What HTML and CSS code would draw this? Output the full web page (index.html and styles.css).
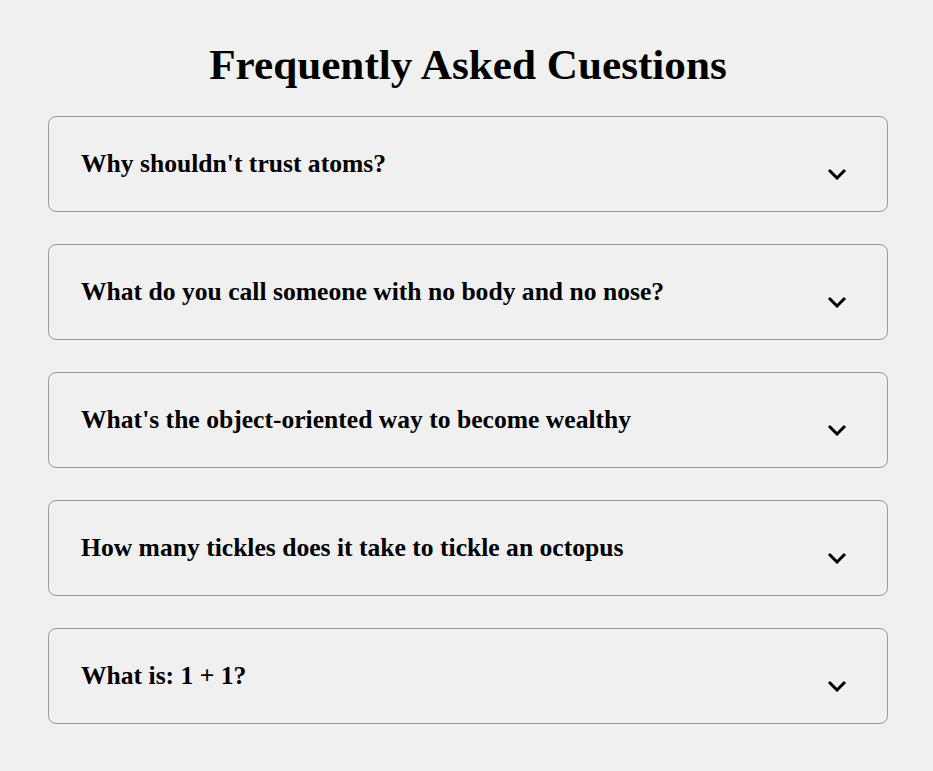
FILE: index.html
```html
<!DOCTYPE html>
<html lang="en">
<head>
<meta charset="utf-8">
<title>FAQ</title>
<link rel="stylesheet" href="styles.css">
</head>
<body>
<main class="faq">
  <h1 class="faq-title">Frequently Asked Cuestions</h1>
  <div class="faq-list">
    <div class="faq-item">
      <h2 class="faq-question">Why shouldn't trust atoms?</h2>
      <svg class="chevron" viewBox="0 0 20 12" width="20" height="12"><path d="M2 2 L10 10 L18 2" fill="none" stroke="#000" stroke-width="3"/></svg>
    </div>
    <div class="faq-item">
      <h2 class="faq-question">What do you call someone with no body and no nose?</h2>
      <svg class="chevron" viewBox="0 0 20 12" width="20" height="12"><path d="M2 2 L10 10 L18 2" fill="none" stroke="#000" stroke-width="3"/></svg>
    </div>
    <div class="faq-item">
      <h2 class="faq-question">What's the object-oriented way to become wealthy</h2>
      <svg class="chevron" viewBox="0 0 20 12" width="20" height="12"><path d="M2 2 L10 10 L18 2" fill="none" stroke="#000" stroke-width="3"/></svg>
    </div>
    <div class="faq-item">
      <h2 class="faq-question">How many tickles does it take to tickle an octopus</h2>
      <svg class="chevron" viewBox="0 0 20 12" width="20" height="12"><path d="M2 2 L10 10 L18 2" fill="none" stroke="#000" stroke-width="3"/></svg>
    </div>
    <div class="faq-item">
      <h2 class="faq-question">What is: 1 + 1?</h2>
      <svg class="chevron" viewBox="0 0 20 12" width="20" height="12"><path d="M2 2 L10 10 L18 2" fill="none" stroke="#000" stroke-width="3"/></svg>
    </div>
  </div>
</main>
</body>
</html>
```

FILE: styles.css
```css
html, body {
  margin: 0;
  padding: 0;
  background: #f0f0f0;
}
body {
  font-family: "Liberation Serif", "Times New Roman", serif;
  color: #000;
}
.faq {
  padding: 40px 45px 40px 48px;
}
.faq-title {
  margin: 0 0 26px;
  font-size: 43.2px;
  font-weight: bold;
  text-align: center;
  line-height: 50px;
}
.faq-list {
  display: flex;
  flex-direction: column;
  gap: 32px;
}
.faq-item {
  display: flex;
  align-items: center;
  justify-content: space-between;
  height: 96px;
  box-sizing: border-box;
  border: 1px solid #999;
  border-radius: 8px;
  padding: 0 40px 0 32px;
}
.faq-question {
  margin: 0;
  font-size: 25.6px;
  font-weight: bold;
  line-height: 30px;
}
.chevron {
  display: block;
  margin-top: 20px;
}
```
